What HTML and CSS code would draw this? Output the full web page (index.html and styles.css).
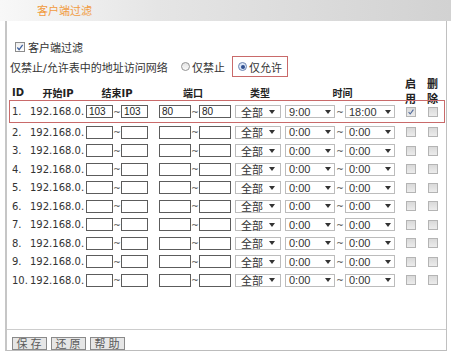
FILE: index.html
```html
<!DOCTYPE html>
<html lang="zh-CN">
<head>
    <meta charset="UTF-8">
    <title>客户端过滤</title>
    <link rel="stylesheet" href="styles.css">
</head>
<body>
    <div class="titlebar">客户端过滤</div>
    <div class="frame">
        <div class="opt-row">
            <span class="cbox on"><svg width="9" height="9" viewBox="0 0 9 9"><polyline points="1.5,4.5 3.5,7 7.5,1.5" fill="none" stroke="#3d5f9e" stroke-width="1.4"/></svg></span>
            <span class="opt-label">客户端过滤</span>
        </div>
        <div class="mode-row">
            <span class="mode-text">仅禁止/允许表中的地址访问网络</span>
            <span class="radio"></span><span class="radio-label">仅禁止</span>
            <span class="mode-pick"><span class="radio on"></span><span class="radio-label">仅允许</span></span>
        </div>

        <div class="row head">
            <span class="c-id">ID</span>
            <span class="c-ip">开始IP</span>
            <span class="c-range">结束IP</span>
            <span class="c-port">端口</span>
            <span class="c-type">类型</span>
            <span class="c-time">时间</span>
            <span class="c-chk stack">启<br>用</span>
            <span class="c-chk stack">删<br>除</span>
        </div>

        <div class="row hl">
            <span class="c-id">1.</span>
            <span class="c-ip">192.168.0.</span>
            <span class="c-range"><input class="ip" type="text" value="103"><i class="tl">~</i><input class="ip" type="text" value="103"></span>
            <span class="c-port"><input class="port" type="text" value="80"><i class="tl">~</i><input class="port" type="text" value="80"></span>
            <span class="c-type"><span class="sel type">全部<b class="arr"></b></span></span>
            <span class="c-time"><span class="sel time">9:00<b class="arr"></b></span><i class="tl wide">~</i><span class="sel time">18:00<b class="arr"></b></span></span>
            <span class="c-chk"><span class="box"><svg width="10" height="10" viewBox="0 0 10 10"><polyline points="2,5 4,7.5 8,2" fill="none" stroke="#4a6599" stroke-width="1.3"/></svg></span></span>
            <span class="c-chk"><span class="box"></span></span>
        </div>
        <div class="row">
            <span class="c-id">2.</span>
            <span class="c-ip">192.168.0.</span>
            <span class="c-range"><input class="ip" type="text"><i class="tl">~</i><input class="ip" type="text"></span>
            <span class="c-port"><input class="port" type="text"><i class="tl">~</i><input class="port" type="text"></span>
            <span class="c-type"><span class="sel type">全部<b class="arr"></b></span></span>
            <span class="c-time"><span class="sel time">0:00<b class="arr"></b></span><i class="tl wide">~</i><span class="sel time">0:00<b class="arr"></b></span></span>
            <span class="c-chk"><span class="box"></span></span>
            <span class="c-chk"><span class="box"></span></span>
        </div>
        <div class="row">
            <span class="c-id">3.</span>
            <span class="c-ip">192.168.0.</span>
            <span class="c-range"><input class="ip" type="text"><i class="tl">~</i><input class="ip" type="text"></span>
            <span class="c-port"><input class="port" type="text"><i class="tl">~</i><input class="port" type="text"></span>
            <span class="c-type"><span class="sel type">全部<b class="arr"></b></span></span>
            <span class="c-time"><span class="sel time">0:00<b class="arr"></b></span><i class="tl wide">~</i><span class="sel time">0:00<b class="arr"></b></span></span>
            <span class="c-chk"><span class="box"></span></span>
            <span class="c-chk"><span class="box"></span></span>
        </div>
        <div class="row">
            <span class="c-id">4.</span>
            <span class="c-ip">192.168.0.</span>
            <span class="c-range"><input class="ip" type="text"><i class="tl">~</i><input class="ip" type="text"></span>
            <span class="c-port"><input class="port" type="text"><i class="tl">~</i><input class="port" type="text"></span>
            <span class="c-type"><span class="sel type">全部<b class="arr"></b></span></span>
            <span class="c-time"><span class="sel time">0:00<b class="arr"></b></span><i class="tl wide">~</i><span class="sel time">0:00<b class="arr"></b></span></span>
            <span class="c-chk"><span class="box"></span></span>
            <span class="c-chk"><span class="box"></span></span>
        </div>
        <div class="row">
            <span class="c-id">5.</span>
            <span class="c-ip">192.168.0.</span>
            <span class="c-range"><input class="ip" type="text"><i class="tl">~</i><input class="ip" type="text"></span>
            <span class="c-port"><input class="port" type="text"><i class="tl">~</i><input class="port" type="text"></span>
            <span class="c-type"><span class="sel type">全部<b class="arr"></b></span></span>
            <span class="c-time"><span class="sel time">0:00<b class="arr"></b></span><i class="tl wide">~</i><span class="sel time">0:00<b class="arr"></b></span></span>
            <span class="c-chk"><span class="box"></span></span>
            <span class="c-chk"><span class="box"></span></span>
        </div>
        <div class="row">
            <span class="c-id">6.</span>
            <span class="c-ip">192.168.0.</span>
            <span class="c-range"><input class="ip" type="text"><i class="tl">~</i><input class="ip" type="text"></span>
            <span class="c-port"><input class="port" type="text"><i class="tl">~</i><input class="port" type="text"></span>
            <span class="c-type"><span class="sel type">全部<b class="arr"></b></span></span>
            <span class="c-time"><span class="sel time">0:00<b class="arr"></b></span><i class="tl wide">~</i><span class="sel time">0:00<b class="arr"></b></span></span>
            <span class="c-chk"><span class="box"></span></span>
            <span class="c-chk"><span class="box"></span></span>
        </div>
        <div class="row">
            <span class="c-id">7.</span>
            <span class="c-ip">192.168.0.</span>
            <span class="c-range"><input class="ip" type="text"><i class="tl">~</i><input class="ip" type="text"></span>
            <span class="c-port"><input class="port" type="text"><i class="tl">~</i><input class="port" type="text"></span>
            <span class="c-type"><span class="sel type">全部<b class="arr"></b></span></span>
            <span class="c-time"><span class="sel time">0:00<b class="arr"></b></span><i class="tl wide">~</i><span class="sel time">0:00<b class="arr"></b></span></span>
            <span class="c-chk"><span class="box"></span></span>
            <span class="c-chk"><span class="box"></span></span>
        </div>
        <div class="row">
            <span class="c-id">8.</span>
            <span class="c-ip">192.168.0.</span>
            <span class="c-range"><input class="ip" type="text"><i class="tl">~</i><input class="ip" type="text"></span>
            <span class="c-port"><input class="port" type="text"><i class="tl">~</i><input class="port" type="text"></span>
            <span class="c-type"><span class="sel type">全部<b class="arr"></b></span></span>
            <span class="c-time"><span class="sel time">0:00<b class="arr"></b></span><i class="tl wide">~</i><span class="sel time">0:00<b class="arr"></b></span></span>
            <span class="c-chk"><span class="box"></span></span>
            <span class="c-chk"><span class="box"></span></span>
        </div>
        <div class="row">
            <span class="c-id">9.</span>
            <span class="c-ip">192.168.0.</span>
            <span class="c-range"><input class="ip" type="text"><i class="tl">~</i><input class="ip" type="text"></span>
            <span class="c-port"><input class="port" type="text"><i class="tl">~</i><input class="port" type="text"></span>
            <span class="c-type"><span class="sel type">全部<b class="arr"></b></span></span>
            <span class="c-time"><span class="sel time">0:00<b class="arr"></b></span><i class="tl wide">~</i><span class="sel time">0:00<b class="arr"></b></span></span>
            <span class="c-chk"><span class="box"></span></span>
            <span class="c-chk"><span class="box"></span></span>
        </div>
        <div class="row">
            <span class="c-id">10.</span>
            <span class="c-ip">192.168.0.</span>
            <span class="c-range"><input class="ip" type="text"><i class="tl">~</i><input class="ip" type="text"></span>
            <span class="c-port"><input class="port" type="text"><i class="tl">~</i><input class="port" type="text"></span>
            <span class="c-type"><span class="sel type">全部<b class="arr"></b></span></span>
            <span class="c-time"><span class="sel time">0:00<b class="arr"></b></span><i class="tl wide">~</i><span class="sel time">0:00<b class="arr"></b></span></span>
            <span class="c-chk"><span class="box"></span></span>
            <span class="c-chk"><span class="box"></span></span>
        </div>

        <div class="footer">
            <button type="button" class="btn">保存</button>
            <button type="button" class="btn">还原</button>
            <button type="button" class="btn">帮助</button>
        </div>
    </div>
</body>
</html>
```

FILE: styles.css
```css
body {
    margin: 0;
    font-family: "DejaVu Sans", "Noto Sans CJK SC", sans-serif;
    font-size: 11px;
    color: #333;
    background: #fff;
}
.titlebar {
    height: 21px;
    line-height: 21px;
    padding-left: 37px;
    font-family: "Noto Sans CJK SC", sans-serif;
    color: #f19b3f;
    background: linear-gradient(to right, #f8f8f8, #e5e5e5 35%, #d2d2d2);
}
.frame {
    box-sizing: border-box;
    width: 442px;
    height: 330px;
    margin-left: 5px;
    padding-top: 18px;
    border-left: 2px solid #c6c6c6;
    border-right: 1px solid #c0c0c0;
    border-bottom: 1px solid #bcbcbc;
    display: flex;
    flex-direction: column;
}
.opt-row {
    height: 16px;
    padding-left: 8px;
    display: flex;
    align-items: center;
}
.cbox {
    box-sizing: border-box;
    width: 10px;
    height: 10px;
    border: 1px solid #8c8c8c;
    background: linear-gradient(#eee, #fff);
    display: flex;
    align-items: center;
    justify-content: center;
}
.opt-label {
    margin-left: 3px;
    font-family: "Noto Sans CJK SC", sans-serif;
}
.mode-row {
    height: 21px;
    margin-top: 1px;
    padding-left: 3px;
    display: flex;
    align-items: center;
}
.mode-text {
    width: 171px;
}
.radio {
    box-sizing: border-box;
    width: 9px;
    height: 9px;
    border: 1px solid #939393;
    border-radius: 50%;
    background: linear-gradient(#e4e4e4, #fafafa);
    display: flex;
    align-items: center;
    justify-content: center;
}
.radio.on {
    border-color: #6f86b2;
    background: #dbe6f6;
}
.radio.on::after {
    content: "";
    width: 4px;
    height: 4px;
    border-radius: 50%;
    background: #2f4f8f;
}
.radio-label {
    margin-left: 2px;
    font-family: "Noto Sans CJK SC", sans-serif;
}
.mode-pick {
    box-sizing: border-box;
    height: 21px;
    margin-left: 7px;
    padding: 0 5px;
    border: 1px solid #c96a6a;
    display: flex;
    align-items: center;
}

/* filter table */
.row {
    box-sizing: border-box;
    height: 18.5px;
    margin-left: 2px;
    width: 436px;
    border: 1px solid transparent;
    border-top: 0;
    border-bottom: 0;
    display: grid;
    grid-template-columns: 20px 56px 67px 82px 50px 115px 21px 23px;
    align-items: center;
    font-size: 10px;
}
.row > span {
    display: flex;
    align-items: center;
    white-space: nowrap;
}
.row.head {
    height: 23px;
    font-weight: bold;
    color: #222;
}
.row.head > span {
    justify-content: center;
    font-size: 10px;
}
.row.head .c-id {
    justify-content: flex-start;
}
.row.head .c-range {
    padding-right: 5px;
}
.row.head .c-port {
    padding-right: 8px;
}
.row.head .stack {
    display: block;
    text-align: center;
    line-height: 15px;
    font-size: 11px;
}
.row.hl {
    height: 23px;
    border: 1px solid #c96a6a;
}
.c-id {
    padding-left: 2px;
}
.c-port {
    padding-left: 6px;
}
.c-chk {
    justify-content: center;
}
.ip, .port {
    box-sizing: border-box;
    width: 27px;
    height: 13px;
    margin: 0;
    padding: 0 0 0 2px;
    border: 1px solid #5c5c5c;
    font-family: "Liberation Sans", sans-serif;
    font-size: 10px;
    color: #222;
    background: #fff;
}
.port {
    width: 32px;
}
.tl {
    width: 8px;
    font-style: normal;
    text-align: center;
    font-size: 9px;
    color: #444;
}
.tl.wide {
    width: 10px;
}
.sel {
    box-sizing: border-box;
    height: 13px;
    border: 1px solid #bcbcbc;
    background: #fff;
    display: flex;
    align-items: center;
    justify-content: space-between;
    font-family: "Liberation Sans", "Noto Sans CJK SC", sans-serif;
    font-size: 11px;
    color: #333;
}
.sel.type {
    width: 46px;
    padding: 0 5px 0 5px;
}
.sel.time {
    width: 50px;
    padding: 0 3px 0 3px;
}
.arr {
    width: 0;
    height: 0;
    border-left: 3px solid transparent;
    border-right: 3px solid transparent;
    border-top: 4px solid #333;
}
.box {
    box-sizing: border-box;
    width: 10px;
    height: 10px;
    border: 1px solid #b4b4b4;
    background: linear-gradient(#d9d9d9, #ececec);
    display: flex;
    align-items: center;
    justify-content: center;
}
.footer {
    margin-top: auto;
    border-top: 1px solid #cdcdcd;
    padding: 7px 0 0 5px;
    display: flex;
    gap: 4px;
}
.btn {
    box-sizing: border-box;
    width: 35px;
    height: 13px;
    margin: 0;
    padding: 0 0 0 2px;
    border: 1px solid #8a8a8a;
    background: #e6e6e6;
    color: #5a5a5a;
    font-family: "Noto Sans CJK SC", sans-serif;
    font-size: 11px;
    line-height: 11px;
    letter-spacing: 3px;
}
```
